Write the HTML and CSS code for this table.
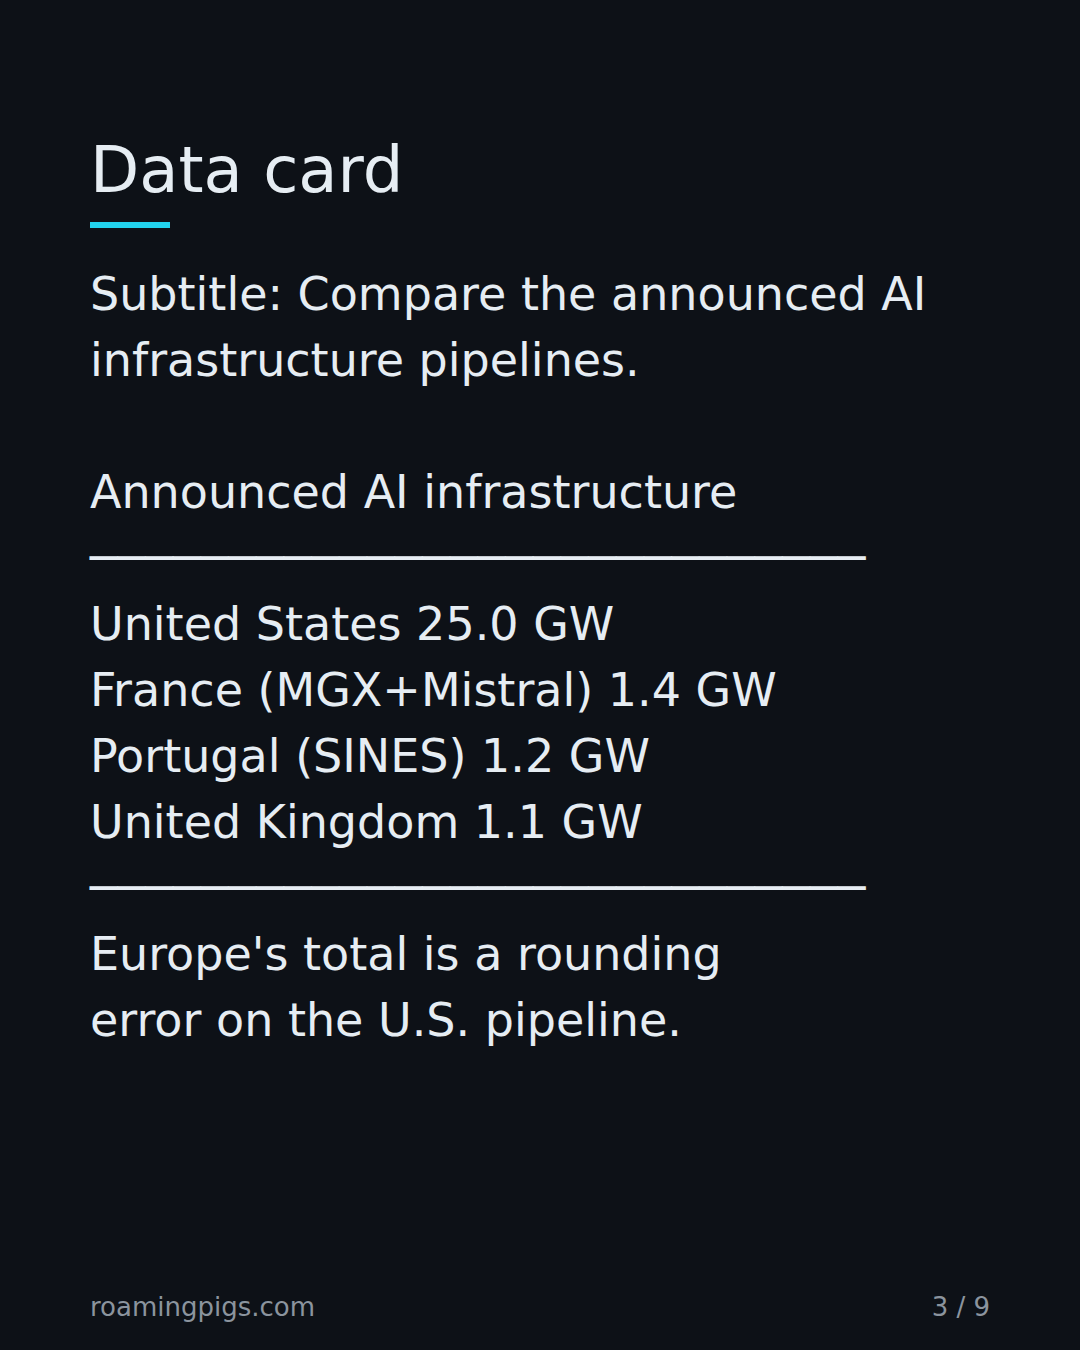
FILE: index.html
```html
<!DOCTYPE html>
<html lang="en">
<head>
  <meta charset="UTF-8" />
  <title>Data card</title>
  <link rel="stylesheet" href="styles.css">
</head>
<body>
  <div class="slide">
    <h1>Data card</h1>
    <div class="accent"></div>
    <div class="card-text">Subtitle: Compare the announced AI
infrastructure pipelines.

Announced AI infrastructure
────────────────────────────
United States 25.0 GW
France (MGX+Mistral) 1.4 GW
Portugal (SINES) 1.2 GW
United Kingdom 1.1 GW
────────────────────────────
Europe's total is a rounding
error on the U.S. pipeline.</div>

    <div class="footer">
      <span>roamingpigs.com</span>
      <span>3 / 9</span>
    </div>
  </div>
</body>
</html>
```

FILE: styles.css
```css
* {
  box-sizing: border-box;
  margin: 0;
  padding: 0;
}

body {
  background: #0d1117;
  color: #e6edf3;
  font-family: 'DejaVu Sans', sans-serif;
}

.slide {
  width: 1080px;
  height: 1350px;
  padding: 132px 90px 28px;
  display: flex;
  flex-direction: column;
}

h1 {
  font-size: 64px;
  line-height: 76px;
  font-weight: normal;
}

.accent {
  width: 80px;
  height: 6px;
  margin-top: 14px;
  background: #22d3ee;
}

.card-text {
  margin-top: 33px;
  font-size: 46px;
  line-height: 66px;
  white-space: pre-wrap;
}

.footer {
  margin-top: auto;
  display: flex;
  justify-content: space-between;
  font-size: 26px;
  line-height: 30px;
  color: #8b949e;
}
```
